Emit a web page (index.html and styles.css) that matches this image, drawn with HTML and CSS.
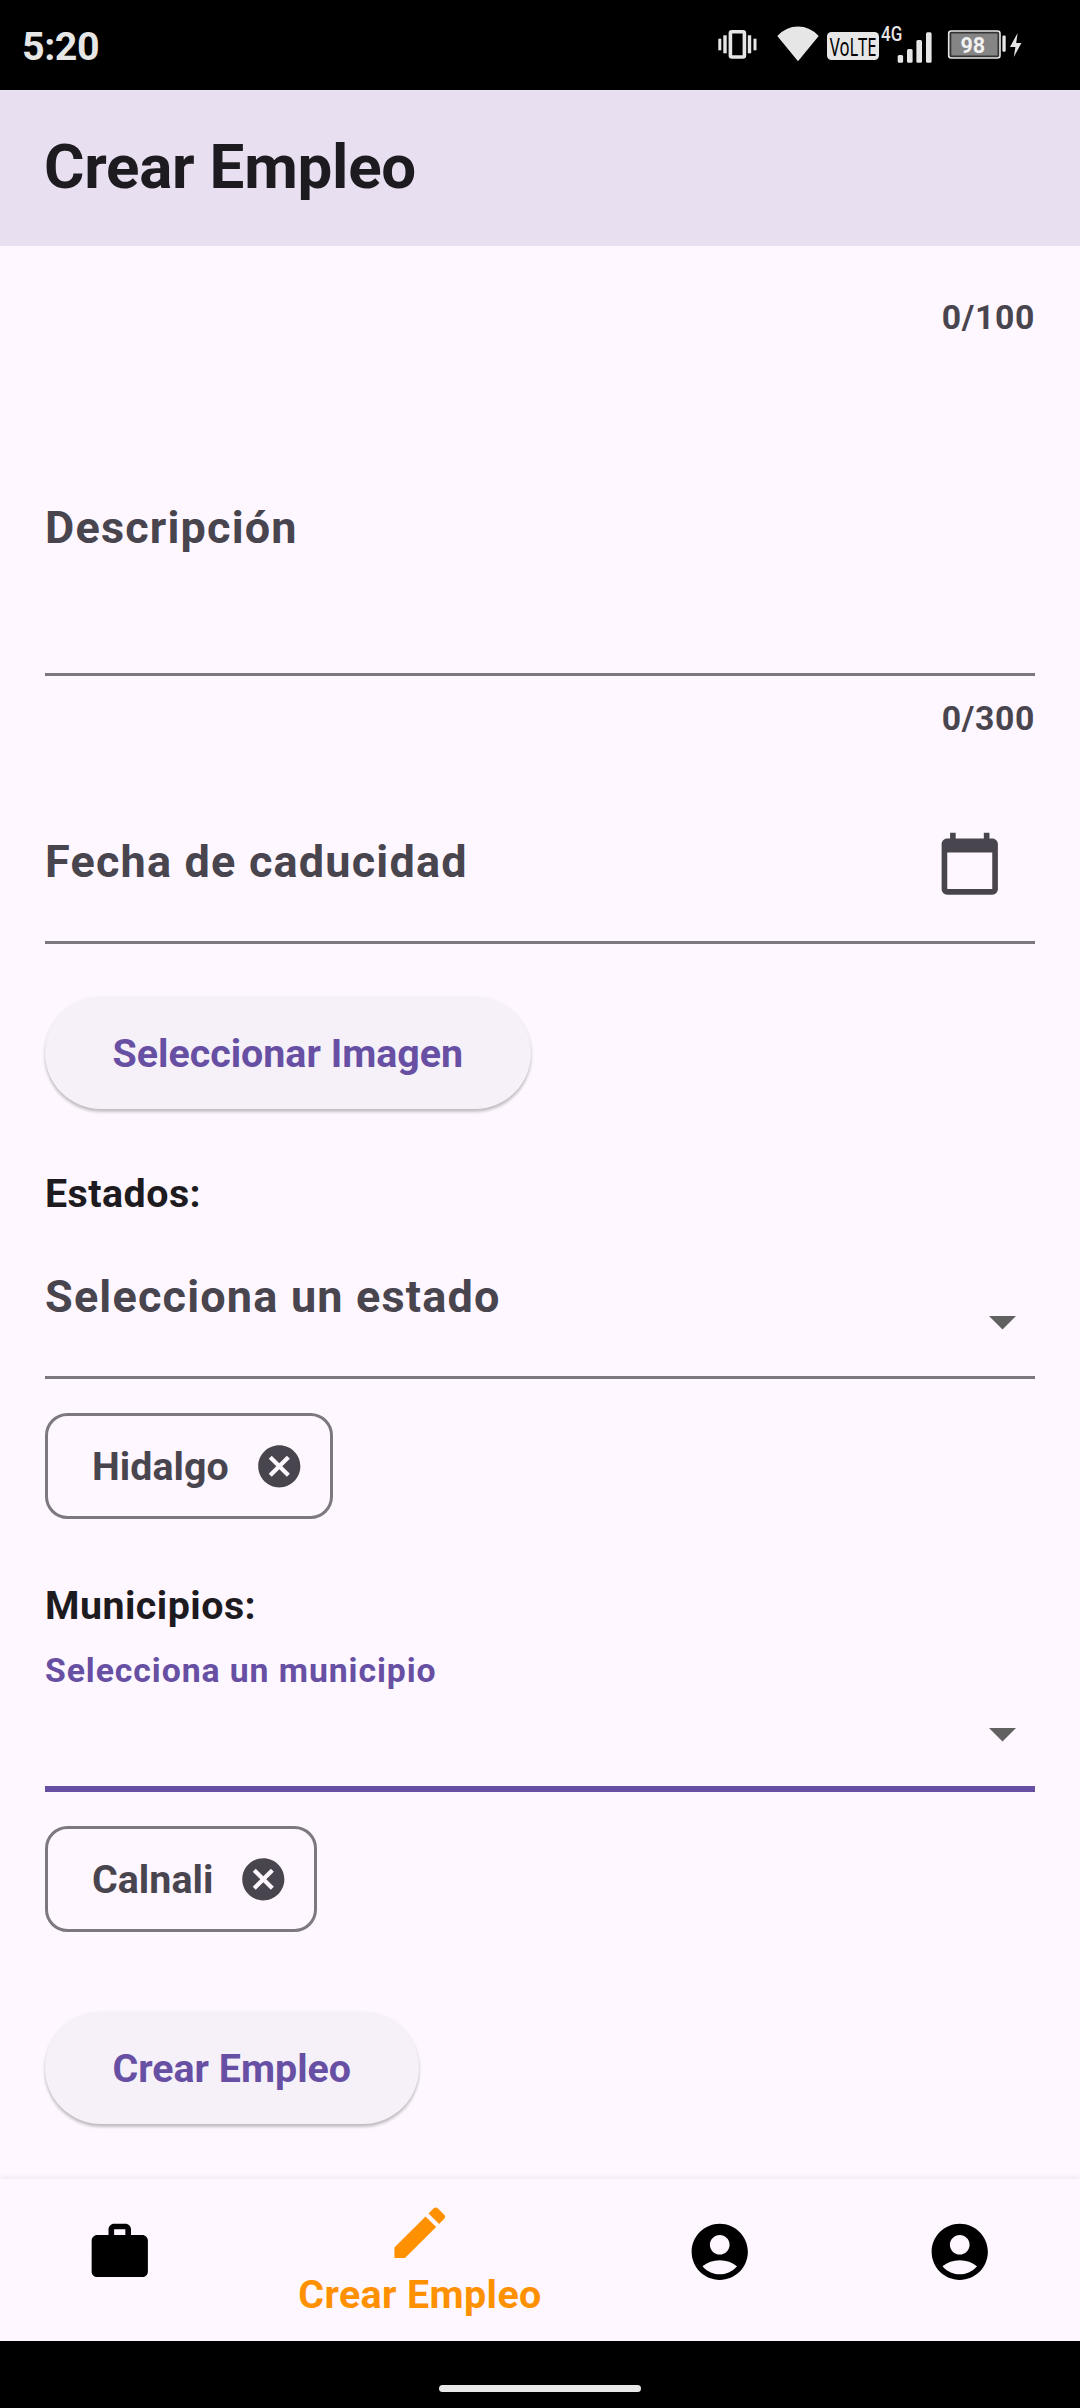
FILE: index.html
```html
<!DOCTYPE html>
<html lang="es">
<head>
<meta charset="utf-8">
<title>Crear Empleo</title>
<link rel="stylesheet" href="styles.css">
</head>
<body>
<div class="screen">
  <div class="status-bar">
    <span class="clock">5:20</span>
    <svg class="status-icons" width="310" height="90" viewBox="715 0 310 90" fill="#e6e6e6">
      <rect x="718.3" y="38.7" width="3" height="11.6"/>
      <rect x="723.3" y="35.3" width="3.4" height="18"/>
      <rect x="730.4" y="31.8" width="14" height="25.2" rx="1.5" fill="none" stroke="#e6e6e6" stroke-width="3.6"/>
      <rect x="747.8" y="35.3" width="3.4" height="18"/>
      <rect x="753.5" y="38.7" width="3" height="11.6"/>
      <path d="M777.3 36Q786 26.5 798 26.5T818.7 36L798 61.2z"/>
      <rect x="827" y="32" width="52" height="28" rx="4.5"/>
      <text class="volte" transform="translate(829.8 56) scale(.68 1)">VoLTE</text>
      <text class="network" transform="translate(881 41) scale(.85 1)">4G</text>
      <rect x="897.7" y="55" width="5.4" height="7.7" rx="1.5"/>
      <rect x="907" y="49" width="5.6" height="13.7" rx="1.5"/>
      <rect x="916.4" y="40" width="5.6" height="22.7" rx="1.5"/>
      <rect x="926" y="32.3" width="5.6" height="30.4" rx="1.5"/>
      <rect x="948.7" y="31" width="51.3" height="27" rx="2.5" fill="#333" stroke="#e6e6e6" stroke-width="1.6"/>
      <rect x="951.3" y="33.5" width="46.2" height="22" fill="#858585"/>
      <text class="charge" x="972.8" y="52.6" text-anchor="middle">98</text>
      <rect x="1002.4" y="35.5" width="3.3" height="16.2" rx="1.2"/>
      <path d="M1017.6 33L1010 47h5.4l-1.6 10 7.6-14h-5.2z"/>
    </svg>
  </div>

  <header class="app-bar"><h1 class="title">Crear Empleo</h1></header>

  <main class="form">
    <div class="counter">0/100</div>
    <div class="field field-description"><span class="label">Descripción</span></div>
    <div class="counter counter-description">0/300</div>
    <div class="field field-date">
      <span class="label">Fecha de caducidad</span>
      <svg class="calendar" viewBox="0 0 24 24" fill="#49454f"><path d="M20 3h-1V1h-2v2H7V1H5v2H4c-1.1 0-2 .9-2 2v16c0 1.1.9 2 2 2h16c1.1 0 2-.9 2-2V5c0-1.1-.9-2-2-2zm0 18H4V8h16v13z"/></svg>
    </div>
    <button class="button">Seleccionar Imagen</button>

    <div class="heading">Estados:</div>
    <div class="field field-select">
      <span class="label">Selecciona un estado</span>
      <svg class="arrow" viewBox="0 0 27 13.5"><path d="M0 0h27L13.5 13.5z"/></svg>
    </div>
    <div class="chip">
      <span>Hidalgo</span>
      <svg class="remove" viewBox="0 0 24 24"><path d="M12 2C6.47 2 2 6.47 2 12s4.47 10 10 10 10-4.47 10-10S17.53 2 12 2zm5 13.59L15.59 17 12 13.41 8.41 17 7 15.59 10.59 12 7 8.41 8.41 7 12 10.59 15.59 7 17 8.41 13.41 12 17 15.59z"/></svg>
    </div>

    <div class="heading heading-towns">Municipios:</div>
    <div class="field field-select field-active">
      <span class="label">Selecciona un municipio</span>
      <svg class="arrow" viewBox="0 0 27 13.5"><path d="M0 0h27L13.5 13.5z"/></svg>
    </div>
    <div class="chip">
      <span>Calnali</span>
      <svg class="remove" viewBox="0 0 24 24"><path d="M12 2C6.47 2 2 6.47 2 12s4.47 10 10 10 10-4.47 10-10S17.53 2 12 2zm5 13.59L15.59 17 12 13.41 8.41 17 7 15.59 10.59 12 7 8.41 8.41 7 12 10.59 15.59 7 17 8.41 13.41 12 17 15.59z"/></svg>
    </div>
    <button class="button button-submit">Crear Empleo</button>
  </main>

  <nav class="nav">
    <div class="nav-item"><svg class="nav-icon" viewBox="0 0 24 24"><path d="M20 6h-4V4c0-1.11-.89-2-2-2h-4c-1.11 0-2 .89-2 2v2H4c-1.11 0-1.99.89-1.99 2L2 19c0 1.11.89 2 2 2h16c1.11 0 2-.89 2-2V8c0-1.11-.89-2-2-2zm-6 0h-4V4h4v2z"/></svg></div>
    <div class="nav-item nav-item-active">
      <svg class="nav-icon" viewBox="0 0 24 24"><path d="M3 17.25V21h3.75L17.81 9.94l-3.75-3.75L3 17.25zM20.71 7.04c.39-.39.39-1.02 0-1.41l-2.34-2.34c-.39-.39-1.02-.39-1.41 0l-1.83 1.83 3.75 3.75 1.83-1.83z"/></svg>
      <span>Crear Empleo</span>
    </div>
    <div class="nav-item"><svg class="nav-icon" viewBox="0 0 24 24"><path d="M12 2C6.48 2 2 6.48 2 12s4.48 10 10 10 10-4.48 10-10S17.52 2 12 2zm0 4c1.93 0 3.5 1.57 3.5 3.5S13.93 13 12 13s-3.5-1.57-3.5-3.5S10.07 6 12 6zm0 14c-2.03 0-4.43-.82-6.14-2.88C7.55 15.8 9.68 15 12 15s4.45.8 6.14 2.12C16.43 19.18 14.03 20 12 20z"/></svg></div>
    <div class="nav-item"><svg class="nav-icon" viewBox="0 0 24 24"><path d="M12 2C6.48 2 2 6.48 2 12s4.48 10 10 10 10-4.48 10-10S17.52 2 12 2zm0 4c1.93 0 3.5 1.57 3.5 3.5S13.93 13 12 13s-3.5-1.57-3.5-3.5S10.07 6 12 6zm0 14c-2.03 0-4.43-.82-6.14-2.88C7.55 15.8 9.68 15 12 15s4.45.8 6.14 2.12C16.43 19.18 14.03 20 12 20z"/></svg></div>
  </nav>
  <div class="gesture-bar"><div class="pill"></div></div>
</div>
</body>
</html>
```

FILE: styles.css
```css
* { box-sizing: border-box; }

body {
  margin: 0;
  background: #fef7ff;
  color: #1d1b20;
  font-family: Roboto, sans-serif;
  font-weight: 700;
}

svg { display: block; flex: none; }

.screen {
  display: flex;
  flex-direction: column;
  width: 1080px;
  height: 2408px;
  overflow: hidden;
}

.status-bar {
  display: flex;
  justify-content: space-between;
  height: 90px;
  padding: 0 55px 0 22px;
  background: #000;
}

.clock {
  color: #e6e6e6;
  font-size: 39.4px;
  line-height: 93px;
  letter-spacing: -.45px;
}

.volte { fill: #000; font: 400 24.5px "Noto Sans", sans-serif; }
.network { font: 500 20px Roboto, sans-serif; }
.charge { fill: #f2f2f2; font: 700 21.5px Roboto, sans-serif; }

.app-bar {
  height: 156px;
  padding-left: 44px;
  background: #e8dff0;
}

.title {
  margin: 0;
  font-size: 61.875px;
  line-height: 154px;
  letter-spacing: -.25px;
}

.form {
  display: flex;
  flex-direction: column;
  align-items: flex-start;
  height: 1933px;
  padding: 49px 45px 0;
}

.counter {
  align-self: flex-end;
  color: #49454f;
  font-size: 33.75px;
  line-height: 45px;
  letter-spacing: .65px;
}

.counter-description { margin-top: 20px; }

.field {
  display: flex;
  align-items: flex-start;
  justify-content: space-between;
  width: 100%;
  border-bottom: 3px solid #7c7780;
}

.label {
  color: #49454f;
  font-size: 45px;
  line-height: 65px;
  letter-spacing: 1.18px;
}

.field-description { height: 336px; padding-top: 155px; }
.field-date { height: 203px; padding: 88px 32px 0 0; }
.field-select { height: 157px; padding: 42px 19px 0 0; }

.calendar { width: 67.5px; height: 67.5px; margin-top: 1px; }

.arrow {
  width: 27px;
  height: 13.5px;
  margin-top: 52px;
  fill: #616161;
}

.field-active {
  height: 158px;
  padding-top: 14px;
  border-bottom: 6px solid #6750a4;
}

.field-active .label {
  color: #6750a4;
  font-size: 33.75px;
  line-height: 45px;
  letter-spacing: .92px;
}

.field-active .arrow { margin-top: 80px; }

.button {
  height: 112px;
  margin-top: 53px;
  padding: 0 67.5px;
  border: 0;
  border-radius: 56px;
  background: #f6f1f9;
  box-shadow: 0 3px 3px rgba(0, 0, 0, .2), 0 1px 4px rgba(0, 0, 0, .08);
  color: #6750a4;
  font: inherit;
  font-size: 39.375px;
  letter-spacing: 0;
}

.button-submit { margin-top: 80px; }

.heading {
  margin-top: 57px;
  font-size: 39.375px;
  line-height: 56px;
  letter-spacing: .47px;
}

.heading-towns { margin-top: 59px; }

.chip {
  display: flex;
  align-items: center;
  height: 106px;
  margin-top: 34px;
  padding: 0 25.5px 0 44px;
  gap: 25px;
  border: 3px solid #7c7780;
  border-radius: 22.5px;
  color: #49454f;
  font-size: 39.375px;
  letter-spacing: .02px;
}

.remove { width: 50.6px; height: 50.6px; fill: #49454f; }

.nav {
  display: flex;
  height: 162px;
  padding-top: 20px;
  background: #fef7ff;
  box-shadow: 0 -1px 5px rgba(0, 0, 0, .08);
}

.nav-item {
  display: flex;
  flex: 1 1 0;
  flex-direction: column;
  align-items: center;
  padding-top: 18.7px;
}

.nav-icon { width: 67.5px; height: 67.5px; fill: #000; }

.nav-item-active {
  flex-grow: 1.5;
  padding-top: 0;
  color: #ff9000;
  font-size: 39.375px;
  line-height: 56px;
  letter-spacing: .4px;
}

.nav-item-active .nav-icon { fill: #ff9000; }

.gesture-bar {
  display: flex;
  justify-content: center;
  height: 67px;
  padding-top: 44px;
  background: #000;
}

.pill {
  width: 202px;
  height: 7px;
  border-radius: 4px;
  background: #e8e8e8;
}
```
